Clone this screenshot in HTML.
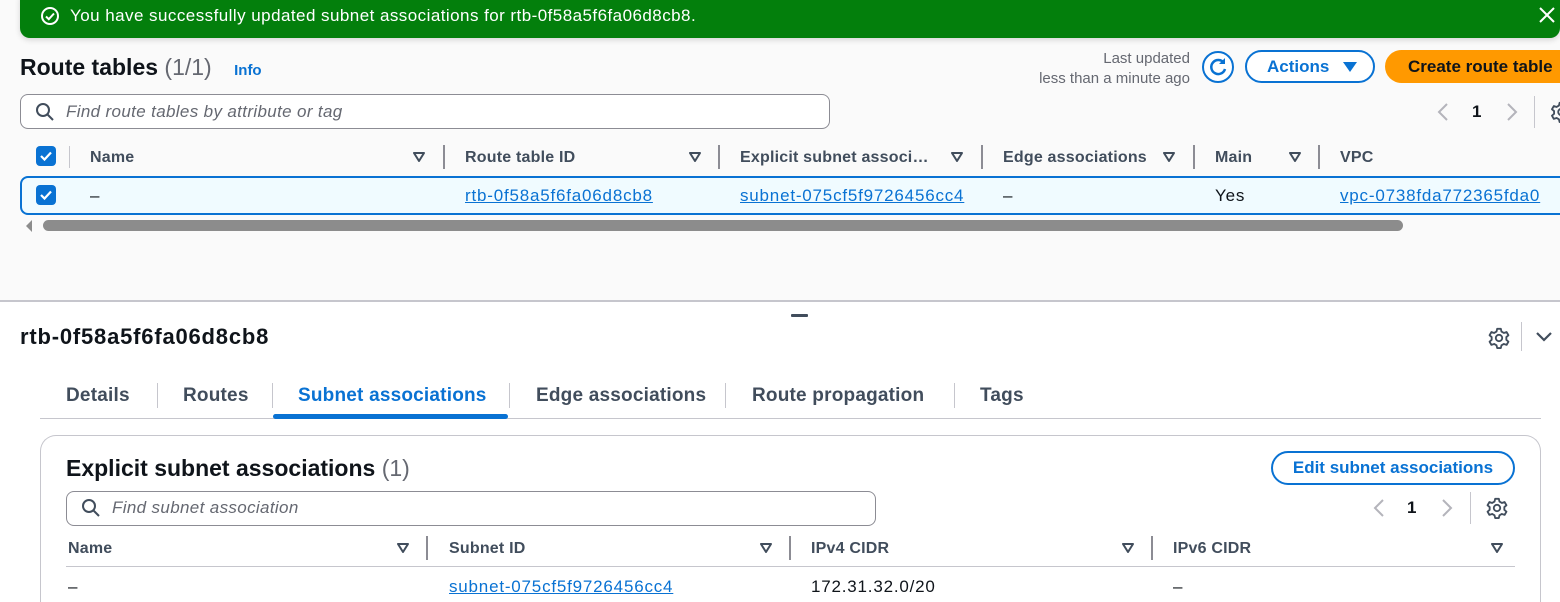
<!DOCTYPE html>
<html style="height:602px;overflow:hidden"><head><meta charset="utf-8"><style>
*{margin:0;padding:0;box-sizing:border-box}
body{width:1560px;height:602px;overflow:hidden;background:#fff;font-family:"Liberation Sans",sans-serif;color:#0f141a;position:relative}
.a{position:absolute;white-space:nowrap}
.h{font-weight:bold;color:#414d5c;font-size:16px;line-height:20px;letter-spacing:.2px}
.td{font-size:17px;line-height:20px;letter-spacing:.8px}
.lk{color:#0972d3;text-decoration:underline}
.sep{position:absolute;width:2px;background:#8c8c94}
.tri{position:absolute;width:12px;height:10px}
.cb{position:absolute;width:20px;height:20px;background:#0972d3;border-radius:4px}
.tab{font-size:19px;font-weight:bold;color:#414d5c;line-height:24px;letter-spacing:.2px}
.tsep{position:absolute;width:1px;height:25px;background:#c6c6cd}
</style></head><body>
<div class="a" style="left:0;top:0;width:1560px;height:300px;background:#fafafa"></div>
<div class="a" style="left:0;top:300px;width:1560px;height:2px;background:#c6c6cd"></div>
<div class="a" style="left:20px;top:-10px;width:1540px;height:48px;background:#037f0c;border-radius:10px;box-shadow:0 2px 6px rgba(0,0,0,.15)"></div>
<svg class="a" style="left:40px;top:6px" width="20" height="20" viewBox="0 0 20 20"><circle cx="10" cy="10" r="8" fill="none" stroke="#fff" stroke-width="2"/><path d="M6 10.5l2.8 2.7L14 7.5" fill="none" stroke="#fff" stroke-width="2"/></svg>
<div class="a" style="left:70px;top:5px;color:#fff;font-size:17px;line-height:22px;letter-spacing:.45px">You have successfully updated subnet associations for rtb-0f58a5f6fa06d8cb8.</div>
<svg class="a" style="left:1539px;top:7px" width="16" height="16" viewBox="0 0 16 16"><path d="M1 1L15 15M15 1L1 15" stroke="#fff" stroke-width="2"/></svg>
<div class="a" style="left:20px;top:53px;font-size:23px;line-height:28px"><b>Route tables</b> <span style="color:#656871">(1/1)</span> <span style="color:#0972d3;font-size:15px;font-weight:bold;margin-left:16px">Info</span></div>
<div class="a" style="left:990px;top:49px;width:200px;text-align:right;color:#656871;font-size:15px;line-height:20px">Last updated<br>less than a minute ago</div>
<svg class="a" style="left:1201px;top:50px" width="34" height="34" viewBox="0 0 34 34"><circle cx="17" cy="17" r="15" fill="#fff" stroke="#0972d3" stroke-width="2"/><path d="M23 13a7 7 0 1 0 1 6" fill="none" stroke="#0972d3" stroke-width="2.5"/><path d="M24 8v6h-6z" fill="#0972d3"/></svg>
<div class="a" style="left:1245px;top:50px;width:130px;height:33px;border:2px solid #0972d3;border-radius:17px;background:#fff;color:#0972d3;font-weight:bold;font-size:17px;line-height:29px;padding-left:20px">Actions<svg style="position:absolute;left:96px;top:10px" width="14" height="10"><path d="M0 0h14L7 10z" fill="#0972d3"/></svg></div>
<div class="a" style="left:1385px;top:50px;width:175px;height:33px;border-radius:17px 0 0 17px;background:#ff9900;color:#0f141a;font-weight:bold;font-size:17px;line-height:33px;padding-left:23px;overflow:hidden">Create route table</div>
<div class="a" style="left:20px;top:94px;width:810px;height:35px;border:1px solid #8c8c94;border-radius:8px;background:#fff"></div>
<svg class="a" style="left:35px;top:102px" width="20" height="20" viewBox="0 0 20 20"><circle cx="8" cy="8" r="6" fill="none" stroke="#414d5c" stroke-width="2"/><path d="M12.5 12.5L18 18" stroke="#414d5c" stroke-width="2"/></svg>
<div class="a" style="left:66px;top:101px;font-size:17px;font-style:italic;color:#656871;line-height:22px;letter-spacing:.35px">Find route tables by attribute or tag</div>
<svg class="a" style="left:1436px;top:102px" width="14" height="20"><path d="M11 2L3 10l8 8" fill="none" stroke="#b4b4bb" stroke-width="2"/></svg>
<div class="a" style="left:1472px;top:101px;font-weight:bold;font-size:17px;line-height:22px">1</div>
<svg class="a" style="left:1505px;top:102px" width="14" height="20"><path d="M3 2l8 8-8 8" fill="none" stroke="#b4b4bb" stroke-width="2"/></svg>
<div class="a" style="left:1534px;top:96px;width:1px;height:32px;background:#c6c6cd"></div>
<svg class="a" style="left:1550px;top:101px" width="10" height="22" viewBox="0 0 10 24"><circle cx="12" cy="12" r="3.5" fill="none" stroke="#414d5c" stroke-width="2"/><path d="M10 2h4l.7 3 2.6 1.5 3-1 2 3.5-2.3 2v3l2.3 2-2 3.5-3-1-2.6 1.5-.7 3h-4l-.7-3-2.6-1.5-3 1-2-3.5 2.3-2v-3l-2.3-2 2-3.5 3 1L9.3 5z" fill="none" stroke="#414d5c" stroke-width="2" stroke-linejoin="round"/></svg>
<div class="cb" style="left:36px;top:146px"><svg width="20" height="20"><path d="M5 10l3.5 3.5L15 6.5" fill="none" stroke="#fff" stroke-width="2.2"/></svg></div>
<div class="sep" style="left:69px;top:146px;height:22px;width:1px;background:#c6c6cd"></div>
<div class="a h" style="left:90px;top:148px">Name</div>
<svg class="tri" style="left:413px;top:152px"><path d="M1 1h10L6 9z" fill="none" stroke="#414d5c" stroke-width="2" stroke-linejoin="round"/></svg>
<div class="sep" style="left:443px;top:145px;height:24px"></div>
<div class="a h" style="left:465px;top:148px">Route table ID</div>
<svg class="tri" style="left:689px;top:152px"><path d="M1 1h10L6 9z" fill="none" stroke="#414d5c" stroke-width="2" stroke-linejoin="round"/></svg>
<div class="sep" style="left:718px;top:145px;height:24px"></div>
<div class="a h" style="left:740px;top:148px">Explicit subnet associ…</div>
<svg class="tri" style="left:951px;top:152px"><path d="M1 1h10L6 9z" fill="none" stroke="#414d5c" stroke-width="2" stroke-linejoin="round"/></svg>
<div class="sep" style="left:981px;top:145px;height:24px"></div>
<div class="a h" style="left:1003px;top:148px">Edge associations</div>
<svg class="tri" style="left:1163px;top:152px"><path d="M1 1h10L6 9z" fill="none" stroke="#414d5c" stroke-width="2" stroke-linejoin="round"/></svg>
<div class="sep" style="left:1193px;top:145px;height:24px"></div>
<div class="a h" style="left:1215px;top:148px">Main</div>
<svg class="tri" style="left:1289px;top:152px"><path d="M1 1h10L6 9z" fill="none" stroke="#414d5c" stroke-width="2" stroke-linejoin="round"/></svg>
<div class="sep" style="left:1318px;top:145px;height:24px"></div>
<div class="a h" style="left:1340px;top:148px">VPC</div>
<div class="a" style="left:20px;top:176px;width:1540px;height:39px;background:#f0fbff;border:2px solid #0972d3;border-right:none;border-radius:8px 0 0 8px"></div>
<div class="cb" style="left:36px;top:185px"><svg width="20" height="20"><path d="M5 10l3.5 3.5L15 6.5" fill="none" stroke="#fff" stroke-width="2.2"/></svg></div>
<div class="a td" style="left:90px;top:186px">–</div>
<div class="a td lk" style="left:465px;top:186px">rtb-0f58a5f6fa06d8cb8</div>
<div class="a td lk" style="left:740px;top:186px">subnet-075cf5f9726456cc4</div>
<div class="a td" style="left:1003px;top:186px">–</div>
<div class="a td" style="left:1215px;top:186px">Yes</div>
<div class="a td lk" style="left:1340px;top:186px">vpc-0738fda772365fda0</div>
<svg class="a" style="left:24px;top:220px" width="10" height="12"><path d="M8 0v12L2 6z" fill="#8c8c8c"/></svg>
<div class="a" style="left:43px;top:220px;width:1360px;height:11px;background:#8c8c8c;border-radius:6px"></div>
<div class="a" style="left:791px;top:314px;width:17px;height:3px;background:#414d5c;border-radius:1px"></div>
<div class="a" style="left:20px;top:324px;font-size:22px;font-weight:bold;line-height:26px;letter-spacing:.8px">rtb-0f58a5f6fa06d8cb8</div>
<svg class="a" style="left:1488px;top:327px" width="22" height="22" viewBox="0 0 24 24"><circle cx="12" cy="12" r="3.5" fill="none" stroke="#414d5c" stroke-width="2"/><path d="M10 2h4l.7 3 2.6 1.5 3-1 2 3.5-2.3 2v3l2.3 2-2 3.5-3-1-2.6 1.5-.7 3h-4l-.7-3-2.6-1.5-3 1-2-3.5 2.3-2v-3l-2.3-2 2-3.5 3 1L9.3 5z" fill="none" stroke="#414d5c" stroke-width="2" stroke-linejoin="round"/></svg>
<div class="a" style="left:1521px;top:322px;width:1px;height:29px;background:#c6c6cd"></div>
<svg class="a" style="left:1535px;top:331px" width="18" height="12"><path d="M2 2l7 7 7-7" fill="none" stroke="#414d5c" stroke-width="2.2"/></svg>
<div class="a tab" style="left:66px;top:384px">Details</div>
<div class="tsep" style="left:157px;top:383px"></div>
<div class="a tab" style="left:183px;top:384px">Routes</div>
<div class="tsep" style="left:272px;top:383px"></div>
<div class="a tab" style="left:298px;top:384px;color:#0972d3">Subnet associations</div>
<div class="tsep" style="left:509px;top:383px"></div>
<div class="a tab" style="left:536px;top:384px">Edge associations</div>
<div class="tsep" style="left:725px;top:383px"></div>
<div class="a tab" style="left:752px;top:384px">Route propagation</div>
<div class="tsep" style="left:954px;top:383px"></div>
<div class="a tab" style="left:980px;top:384px">Tags</div>
<div class="a" style="left:40px;top:418px;width:1501px;height:1px;background:#c6c6cd"></div>
<div class="a" style="left:273px;top:414px;width:235px;height:5px;background:#0972d3;border-radius:3px"></div>
<div class="a" style="left:40px;top:435px;width:1501px;height:167px;border:1px solid #c6c6cd;border-bottom:none;border-radius:16px 16px 0 0"></div>
<div class="a" style="left:66px;top:454px;font-size:23px;line-height:28px"><b>Explicit subnet associations</b> <span style="color:#656871">(1)</span></div>
<div class="a" style="left:1271px;top:451px;width:244px;height:34px;border:2px solid #0972d3;border-radius:17px;color:#0972d3;font-weight:bold;font-size:17px;line-height:30px;text-align:center">Edit subnet associations</div>
<div class="a" style="left:66px;top:491px;width:810px;height:35px;border:1px solid #8c8c94;border-radius:8px"></div>
<svg class="a" style="left:81px;top:498px" width="20" height="20" viewBox="0 0 20 20"><circle cx="8" cy="8" r="6" fill="none" stroke="#414d5c" stroke-width="2"/><path d="M12.5 12.5L18 18" stroke="#414d5c" stroke-width="2"/></svg>
<div class="a" style="left:112px;top:497px;font-size:17px;font-style:italic;color:#656871;line-height:22px;letter-spacing:.35px">Find subnet association</div>
<svg class="a" style="left:1372px;top:498px" width="14" height="20"><path d="M11 2L3 10l8 8" fill="none" stroke="#b4b4bb" stroke-width="2"/></svg>
<div class="a" style="left:1407px;top:497px;font-weight:bold;font-size:17px;line-height:22px">1</div>
<svg class="a" style="left:1440px;top:498px" width="14" height="20"><path d="M3 2l8 8-8 8" fill="none" stroke="#b4b4bb" stroke-width="2"/></svg>
<div class="a" style="left:1470px;top:492px;width:1px;height:32px;background:#c6c6cd"></div>
<svg class="a" style="left:1486px;top:497px" width="22" height="22" viewBox="0 0 24 24"><circle cx="12" cy="12" r="3.5" fill="none" stroke="#414d5c" stroke-width="2"/><path d="M10 2h4l.7 3 2.6 1.5 3-1 2 3.5-2.3 2v3l2.3 2-2 3.5-3-1-2.6 1.5-.7 3h-4l-.7-3-2.6-1.5-3 1-2-3.5 2.3-2v-3l-2.3-2 2-3.5 3 1L9.3 5z" fill="none" stroke="#414d5c" stroke-width="2" stroke-linejoin="round"/></svg>
<div class="a h" style="left:68px;top:539px">Name</div>
<svg class="tri" style="left:397px;top:543px"><path d="M1 1h10L6 9z" fill="none" stroke="#414d5c" stroke-width="2" stroke-linejoin="round"/></svg>
<div class="sep" style="left:426px;top:536px;height:24px"></div>
<div class="a h" style="left:449px;top:539px">Subnet ID</div>
<svg class="tri" style="left:760px;top:543px"><path d="M1 1h10L6 9z" fill="none" stroke="#414d5c" stroke-width="2" stroke-linejoin="round"/></svg>
<div class="sep" style="left:789px;top:536px;height:24px"></div>
<div class="a h" style="left:811px;top:539px">IPv4 CIDR</div>
<svg class="tri" style="left:1122px;top:543px"><path d="M1 1h10L6 9z" fill="none" stroke="#414d5c" stroke-width="2" stroke-linejoin="round"/></svg>
<div class="sep" style="left:1151px;top:536px;height:24px"></div>
<div class="a h" style="left:1173px;top:539px">IPv6 CIDR</div>
<svg class="tri" style="left:1491px;top:543px"><path d="M1 1h10L6 9z" fill="none" stroke="#414d5c" stroke-width="2" stroke-linejoin="round"/></svg>
<div class="a" style="left:66px;top:566px;width:1449px;height:1px;background:#c6c6cd"></div>
<div class="a td" style="left:68px;top:577px">–</div>
<div class="a td lk" style="left:449px;top:577px">subnet-075cf5f9726456cc4</div>
<div class="a td" style="left:811px;top:577px">172.31.32.0/20</div>
<div class="a td" style="left:1173px;top:577px">–</div>
</body></html>
